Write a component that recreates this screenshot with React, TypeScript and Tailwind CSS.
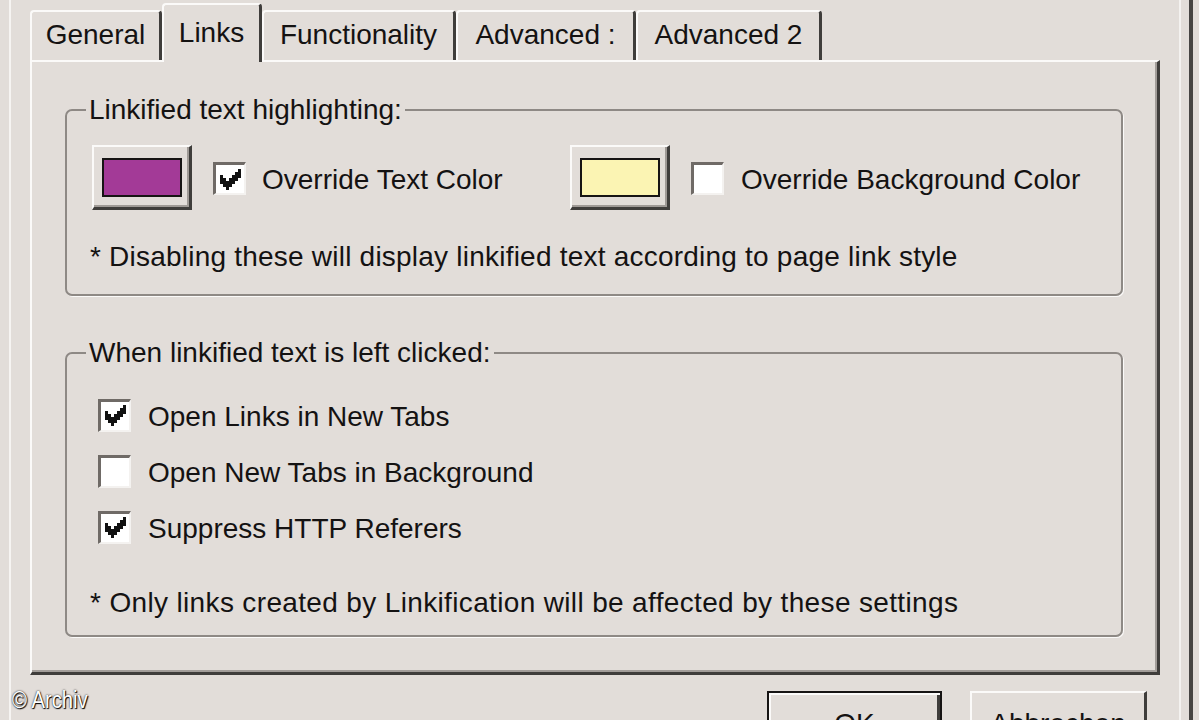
import React from "react";

const CHECK_PIXELS: [number, number][] = [
  [6, 0],
  [5, 1], [6, 1],
  [0, 2], [4, 2], [5, 2], [6, 2],
  [0, 3], [1, 3], [3, 3], [4, 3], [5, 3],
  [0, 4], [1, 4], [2, 4], [3, 4], [4, 4],
  [1, 5], [2, 5], [3, 5],
  [2, 6],
];

function Check({ checked }: { checked?: boolean }) {
  return (
    <span className="flex h-[33px] w-[33px] shrink-0 items-center justify-center border-l-[3px] border-t-[3px] border-r-2 border-b-2 border-l-[#6f6a66] border-t-[#6f6a66] border-r-[#f4f2f0] border-b-[#f4f2f0] bg-white">
      {checked && (
        <svg viewBox="0 0 7 7" className="h-[21px] w-[21px]" shapeRendering="crispEdges">
          {CHECK_PIXELS.map(([x, y]) => (
            <rect key={`${x}-${y}`} x={x} y={y} width={1} height={1} fill="#111" />
          ))}
        </svg>
      )}
    </span>
  );
}

function ColorButton({ swatch }: { swatch: string }) {
  return (
    <div className="flex h-[65px] w-[100px] shrink-0 items-center justify-center border-l-2 border-t-2 border-r-[3px] border-b-[3px] border-l-[#fbfaf9] border-t-[#fbfaf9] border-r-[#3f3d3b] border-b-[#3f3d3b] bg-[#e2ddd9] shadow-[inset_-2px_-2px_0_#9f9a96]">
      <div className={`h-[39px] w-[80px] border-2 border-[#161414] ${swatch}`} />
    </div>
  );
}

function Group({
  title,
  className,
  children,
}: {
  title: string;
  className?: string;
  children: React.ReactNode;
}) {
  return (
    <fieldset
      className={`w-[1058px] rounded-[7px] border-2 border-[#8e8985] p-0 shadow-[1px_1px_0_#fbfaf9] ${className ?? ""}`}
    >
      <legend className="ml-[19px] px-[3px] leading-[32px]">{title}</legend>
      {children}
    </fieldset>
  );
}

const tabs = [
  { label: "General", w: "w-[132px]" },
  { label: "Links", w: "w-[100px]", active: true },
  { label: "Functionality", w: "w-[194px]" },
  { label: "Advanced :", w: "w-[180px]" },
  { label: "Advanced 2", w: "w-[186px]" },
];

export default function App() {
  return (
    <div className="relative h-[720px] w-[1199px] overflow-hidden bg-[#e2ddd9] font-['Liberation_Sans',Arial,sans-serif] text-[28px] text-[#141212]">
      <div className="ml-[9px] w-[1184px] border-l-2 border-r-[4px] border-l-[#f6f4f2] border-r-[#474543] pl-[19px] pt-[3px] shadow-[inset_-8px_0_0_#e2ddd9,inset_-10px_0_0_#f4f2f0]">
        {/* tabs */}
        <div className="flex items-end">
          {tabs.map((t) =>
            t.active ? (
              <div
                key={t.label}
                className={`relative z-10 -mb-[2px] flex h-[59px] ${t.w} items-start justify-center rounded-t-[4px] border-l-2 border-t-2 border-r-[3px] border-l-[#fbfaf9] border-t-[#fbfaf9] border-r-[#3f3d3b] bg-[#e2ddd9] pt-[7px]`}
              >
                {t.label}
              </div>
            ) : (
              <div
                key={t.label}
                className={`flex h-[50px] ${t.w} items-center justify-center rounded-t-[4px] border-l-2 border-t-2 border-r-[3px] border-l-[#fbfaf9] border-t-[#fbfaf9] border-r-[#3f3d3b] pb-[3px]`}
              >
                {t.label}
              </div>
            )
          )}
        </div>

        {/* panel */}
        <div className="h-[615px] w-[1130px] border-l-2 border-t-2 border-r-[3px] border-b-[3px] border-l-[#fbfaf9] border-t-[#fbfaf9] border-r-[#3f3d3b] border-b-[#3f3d3b] pl-[33px] pt-[32px] shadow-[inset_-2px_-2px_0_#a29d99]">
          <Group title="Linkified text highlighting:">
            <div className="flex items-center pl-[25px] pt-[19px]">
              <div className="flex w-[478px] items-center">
                <ColorButton swatch="bg-[#a33a97]" />
                <span className="ml-[21px] pt-[2px]">
                  <Check checked />
                </span>
                <span className="ml-[16px] pt-[5px]">Override Text Color</span>
              </div>
              <ColorButton swatch="bg-[#fbf4b3]" />
              <span className="ml-[21px] pt-[2px]">
                <Check />
              </span>
              <span className="ml-[17px] pt-[5px]">Override Background Color</span>
            </div>
            <p className="mt-[31px] pb-[21px] pl-[23px] leading-[32px] tracking-[0.22px]">
              * Disabling these will display linkified text according to page link style
            </p>
          </Group>

          <Group title="When linkified text is left clicked:" className="mt-[41px]">
            <div className="flex flex-col pl-[31px] pt-[18px]">
              {[
                { label: "Open Links in New Tabs", checked: true },
                { label: "Open New Tabs in Background", checked: false },
                { label: "Suppress HTTP Referers", checked: true },
              ].map((r) => (
                <div key={r.label} className="flex h-[56px] items-center gap-[17px]">
                  <Check checked={r.checked} />
                  <span className="pt-[3px]">{r.label}</span>
                </div>
              ))}
            </div>
            <p className="mt-[32px] pb-[16px] pl-[23px] leading-[32px] tracking-[0.35px]">
              * Only links created by Linkification will be affected by these settings
            </p>
          </Group>
        </div>

        {/* dialog buttons */}
        <div className="mt-[16px] flex w-[1130px] justify-end gap-[28px] pr-[13px]">
          <div className="flex h-[52px] w-[175px] items-start justify-center border-2 border-[#161414] pt-[10px] shadow-[inset_2px_2px_0_#fbfaf9,inset_-3px_-3px_0_#3f3d3b]">
            OK
          </div>
          <div className="flex h-[52px] w-[177px] items-start justify-center border-l-2 border-t-2 border-r-[3px] border-l-[#fbfaf9] border-t-[#fbfaf9] border-r-[#3f3d3b] pt-[10px]">
            Abbrechen
          </div>
        </div>
      </div>

      {/* watermark */}
      <div className="absolute left-[12px] top-[683px] origin-left scale-x-[0.88] text-[23px] text-white [text-shadow:0_0_2px_#000,1px_1px_1px_#000]">
        © Archiv
      </div>
    </div>
  );
}
